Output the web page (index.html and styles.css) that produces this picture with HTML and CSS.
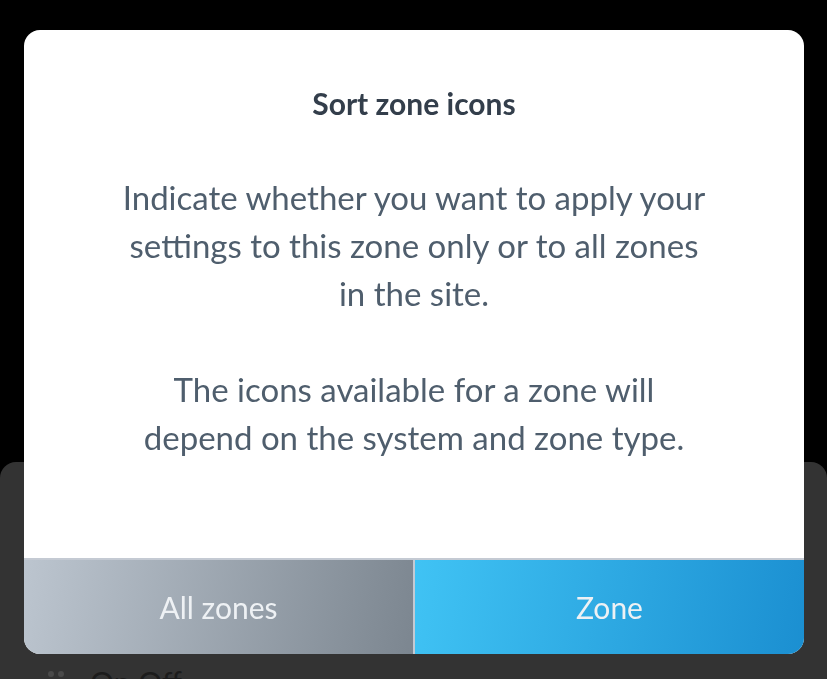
FILE: index.html
```html
<!DOCTYPE html>
<html lang="en">
<head>
<meta charset="utf-8">
<title>Sort zone icons</title>
<link rel="stylesheet" href="styles.css">
</head>
<body>
<div class="sheet">
  <div class="sheet-row">
    <span class="handle"><span class="dot"></span><span class="dot"></span></span>
    <span class="sheet-label">On Off</span>
  </div>
</div>

<div class="modal" role="dialog" aria-labelledby="modal-title">
  <div class="modal-content">
    <h2 class="modal-title" id="modal-title">Sort zone icons</h2>
    <div class="modal-body">
      <p class="modal-text">Indicate whether you want to apply your settings to this zone only or to all zones in the site.</p>
      <p class="modal-text">The icons available for a zone will depend on the system and zone type.</p>
    </div>
  </div>
  <div class="modal-actions">
    <button class="btn btn-secondary" type="button">All zones</button>
    <button class="btn btn-primary" type="button">Zone</button>
  </div>
</div>
</body>
</html>
```

FILE: styles.css
```css
* {
  box-sizing: border-box;
}

html, body {
  margin: 0;
  padding: 0;
  height: 100%;
  overflow: hidden;
}

body {
  background: #000;
  font-family: Lato, "Open Sans", sans-serif;
}

.sheet {
  margin-top: 462px;
  height: 300px;
  background: #333333;
  border-radius: 16px 16px 0 0;
  padding: 205px 0 0 48px;
}

.sheet-row {
  display: flex;
  align-items: flex-start;
  gap: 26px;
}

.handle {
  display: flex;
  gap: 4px;
  padding-top: 4px;
}

.dot {
  width: 6px;
  height: 6px;
  border-radius: 50%;
  background: #4a4a4a;
}

.sheet-label {
  font-size: 30px;
  line-height: 30px;
  color: #1c1c1c;
}

.modal {
  position: fixed;
  top: 30px;
  left: 24px;
  width: 780px;
  height: 624px;
  background: #fff;
  border-radius: 16px;
  overflow: hidden;
  display: flex;
  flex-direction: column;
}

.modal-content {
  flex: 1;
  padding: 55px 95px 0;
  text-align: center;
}

.modal-title {
  margin: 0;
  font-size: 30px;
  line-height: 36px;
  font-weight: 700;
  color: #333e4b;
}

.modal-body {
  margin-top: 52px;
}

.modal-text {
  margin: 0 0 48px;
  font-size: 33px;
  line-height: 48px;
  color: #4f5e6d;
}

.modal-actions {
  display: flex;
  height: 96px;
  border-top: 2px solid #c4cad3;
}

.btn {
  flex: 1;
  border: 0;
  margin: 0;
  padding: 0;
  font-family: inherit;
  font-size: 30px;
  color: #eef1f4;
  cursor: pointer;
}

.btn-secondary {
  background: linear-gradient(100deg, #bcc5cf 0%, #7c8690 100%);
  border-right: 2px solid #c4cad3;
}

.btn-primary {
  background: linear-gradient(100deg, #40c3f4 0%, #1b8fd1 100%);
}
```
